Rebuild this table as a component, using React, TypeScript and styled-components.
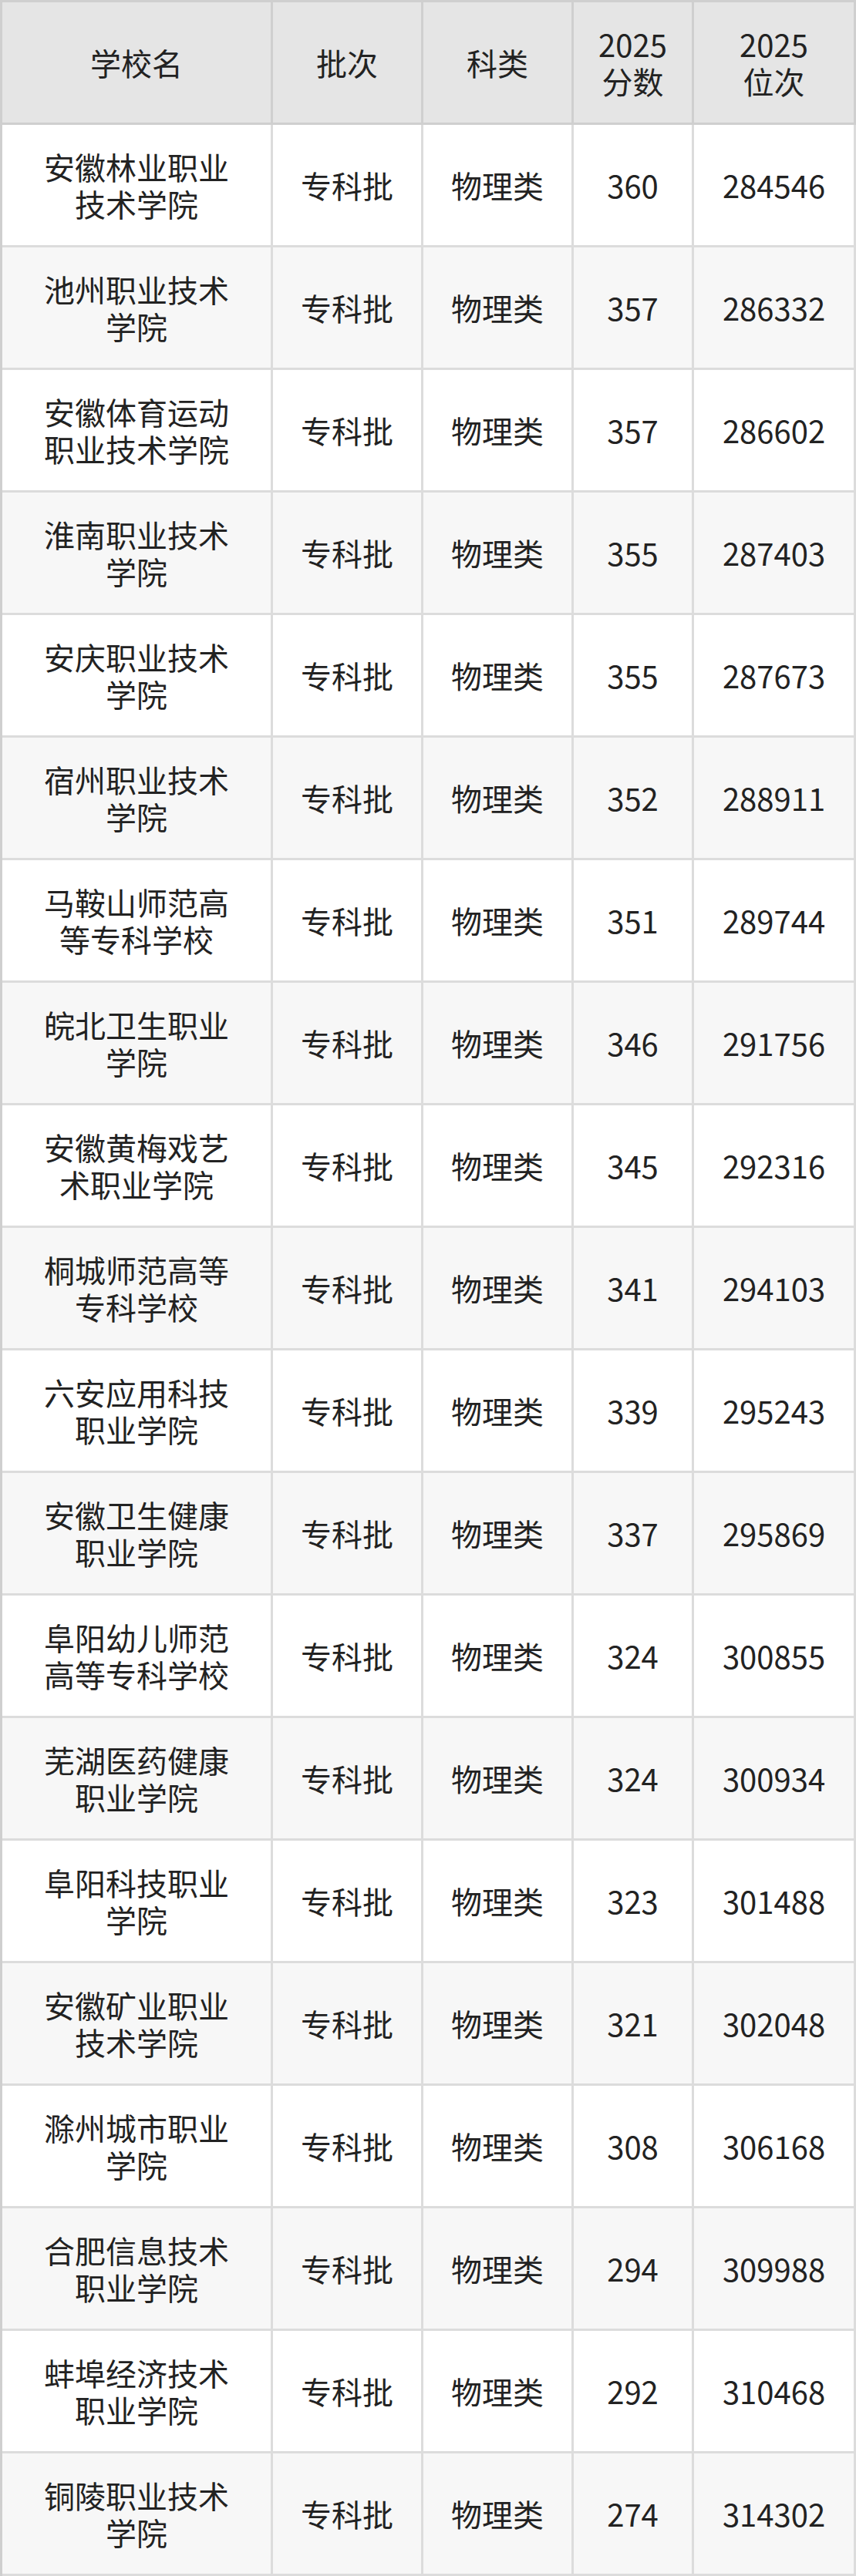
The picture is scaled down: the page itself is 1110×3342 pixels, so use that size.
import React from "react";
import styled, { createGlobalStyle } from "styled-components";

const GlobalStyle = createGlobalStyle`
  html, body {
    margin: 0;
    padding: 0;
    background: #ffffff;
  }
  body {
    font-family: "Noto Sans CJK SC", "Noto Sans", sans-serif;
    color: #222222;
  }
`;

const Table = styled.table`
  width: 1110px;
  border-collapse: separate;
  border-spacing: 0;
  table-layout: fixed;
  border-top: 3px solid #cfcfcf;
  border-left: 3px solid #cfcfcf;
  font-family: "Noto Sans CJK SC", "Noto Sans", sans-serif;
  font-size: 40px;
  line-height: 48px;
  color: #222222;
`;

const Col = styled.col<{ $w: number }>`
  width: ${(p) => p.$w}px;
`;

const HeadCell = styled.th`
  box-sizing: border-box;
  height: 159px;
  padding: 0 10px;
  background: #e5e5e5;
  border-right: 3px solid #cfcfcf;
  border-bottom: 3px solid #cfcfcf;
  font-weight: 400;
  text-align: center;
  vertical-align: middle;
`;

const HeadLine = styled.span`
  display: block;
`;

const Row = styled.tr<{ $striped: boolean }>`
  background: ${(p) => (p.$striped ? "#f7f7f7" : "#ffffff")};
`;

const Cell = styled.td<{ $wide?: boolean }>`
  box-sizing: border-box;
  height: 159px;
  padding: 0 ${(p) => (p.$wide ? 50 : 10)}px;
  border-right: 3px solid #dcdcdc;
  border-bottom: 3px solid #dcdcdc;
  text-align: center;
  vertical-align: middle;
  word-break: break-all;
`;

type Item = { name: string; score: number; rank: number };

const data: Item[] = [
  { name: "安徽林业职业技术学院", score: 360, rank: 284546 },
  { name: "池州职业技术学院", score: 357, rank: 286332 },
  { name: "安徽体育运动职业技术学院", score: 357, rank: 286602 },
  { name: "淮南职业技术学院", score: 355, rank: 287403 },
  { name: "安庆职业技术学院", score: 355, rank: 287673 },
  { name: "宿州职业技术学院", score: 352, rank: 288911 },
  { name: "马鞍山师范高等专科学校", score: 351, rank: 289744 },
  { name: "皖北卫生职业学院", score: 346, rank: 291756 },
  { name: "安徽黄梅戏艺术职业学院", score: 345, rank: 292316 },
  { name: "桐城师范高等专科学校", score: 341, rank: 294103 },
  { name: "六安应用科技职业学院", score: 339, rank: 295243 },
  { name: "安徽卫生健康职业学院", score: 337, rank: 295869 },
  { name: "阜阳幼儿师范高等专科学校", score: 324, rank: 300855 },
  { name: "芜湖医药健康职业学院", score: 324, rank: 300934 },
  { name: "阜阳科技职业学院", score: 323, rank: 301488 },
  { name: "安徽矿业职业技术学院", score: 321, rank: 302048 },
  { name: "滁州城市职业学院", score: 308, rank: 306168 },
  { name: "合肥信息技术职业学院", score: 294, rank: 309988 },
  { name: "蚌埠经济技术职业学院", score: 292, rank: 310468 },
  { name: "铜陵职业技术学院", score: 274, rank: 314302 },
];

export default function App() {
  return (
    <>
      <GlobalStyle />
      <Table>
        <colgroup>
          <Col $w={351} />
          <Col $w={195} />
          <Col $w={195} />
          <Col $w={156} />
          <Col $w={210} />
        </colgroup>
        <thead>
          <tr>
            <HeadCell>学校名</HeadCell>
            <HeadCell>批次</HeadCell>
            <HeadCell>科类</HeadCell>
            <HeadCell>
              <HeadLine>2025</HeadLine>
              <HeadLine>分数</HeadLine>
            </HeadCell>
            <HeadCell>
              <HeadLine>2025</HeadLine>
              <HeadLine>位次</HeadLine>
            </HeadCell>
          </tr>
        </thead>
        <tbody>
          {data.map((d, i) => (
            <Row key={d.name} $striped={i % 2 === 1}>
              <Cell $wide>{d.name}</Cell>
              <Cell>专科批</Cell>
              <Cell>物理类</Cell>
              <Cell>{d.score}</Cell>
              <Cell>{d.rank}</Cell>
            </Row>
          ))}
        </tbody>
      </Table>
    </>
  );
}
